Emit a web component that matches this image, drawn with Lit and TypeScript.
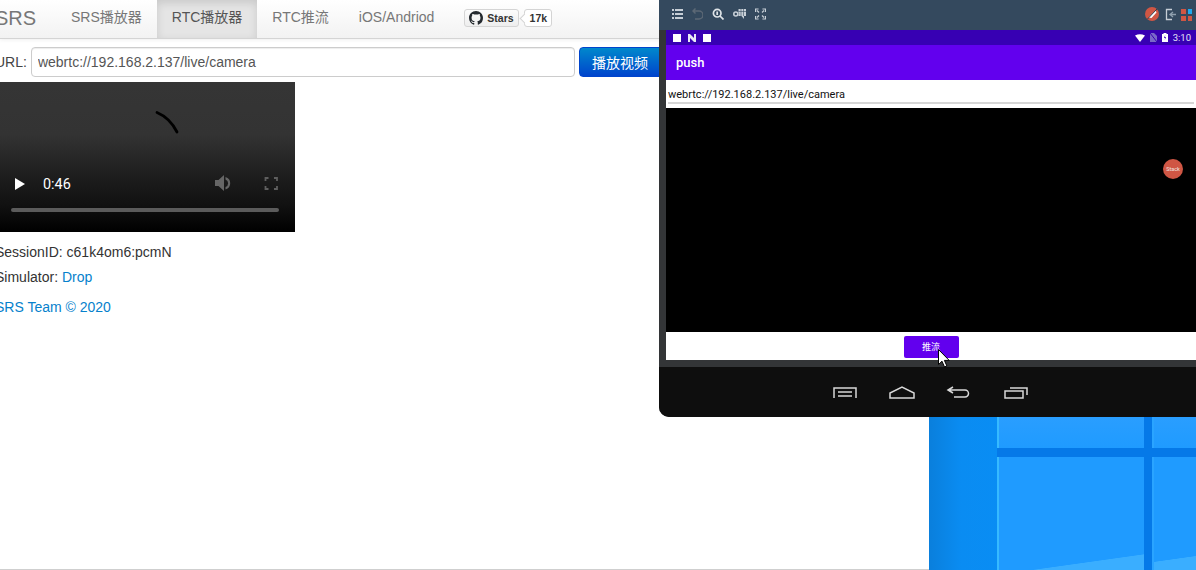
import { LitElement, html, css, svg } from 'lit'
import { customElement } from 'lit/decorators.js'

const GITHUB_MARK =
  'M8 0C3.58 0 0 3.58 0 8c0 3.54 2.29 6.53 5.47 7.59.4.07.55-.17.55-.38 0-.19-.01-.82-.01-1.49-2.01.37-2.53-.49-2.69-.94-.09-.23-.48-.94-.82-1.13-.28-.15-.68-.52-.01-.53.63-.01 1.08.58 1.23.82.72 1.21 1.87.87 2.33.66.07-.52.28-.87.51-1.07-1.78-.2-3.64-.89-3.64-3.95 0-.87.31-1.59.82-2.15-.08-.2-.36-1.02.08-2.12 0 0 .67-.21 2.2.82.64-.18 1.32-.27 2-.27s1.36.09 2 .27c1.53-1.04 2.2-.82 2.2-.82.44 1.1.16 1.92.08 2.12.51.56.82 1.27.82 2.15 0 3.07-1.87 3.75-3.65 3.95.29.25.54.73.54 1.48 0 1.07-.01 1.93-.01 2.2 0 .21.15.46.55.38A8.01 8.01 0 0 0 16 8c0-4.42-3.58-8-8-8z'

/** The browser page on the left: navbar, URL form, video and the notes below. */
@customElement('srs-page')
export class SrsPage extends LitElement {
  static styles = css`
    :host {
      display: block;
      font: 14px/20px 'Liberation Sans', 'Noto Sans CJK SC', sans-serif;
      color: #333;
    }
    a {
      color: #0681cc;
      text-decoration: none;
    }
    .navbar {
      display: flex;
      align-items: stretch;
      height: 38px;
      border-bottom: 1px solid #d4d4d4;
      background: linear-gradient(#ffffff, #f2f2f2);
      box-shadow: 0 1px 4px rgba(0, 0, 0, 0.065);
    }
    .brand {
      width: 61px;
      margin-left: -5px;
      font-size: 20px;
      line-height: 36px;
      color: #777;
    }
    .tab {
      padding: 0 15px;
      line-height: 35px;
      color: #777;
    }
    .tab.active {
      color: #555;
      background: #e5e5e5;
      box-shadow: inset 0 3px 8px rgba(0, 0, 0, 0.125);
    }
    .gh {
      display: flex;
      align-items: flex-start;
      gap: 5px;
      margin: 9px 0 0 15px;
      font: bold 10.5px/16px 'Liberation Sans', sans-serif;
      color: #333;
    }
    .gh-btn {
      display: flex;
      align-items: center;
      gap: 4px;
      height: 18px;
      width: 55px;
      box-sizing: border-box;
      padding-left: 4px;
      border: 1px solid #d5d5d5;
      border-radius: 3px;
      background: linear-gradient(#fcfcfc, #eeeeee);
    }
    .gh-btn svg {
      width: 14px;
      height: 14px;
      flex: none;
    }
    .gh-count {
      position: relative;
      height: 18px;
      width: 28px;
      box-sizing: border-box;
      text-align: center;
      border: 1px solid #d4d4d4;
      border-radius: 3px;
      background: #fff;
    }
    .gh-count::before {
      content: '';
      position: absolute;
      left: -4px;
      top: 5px;
      width: 6px;
      height: 6px;
      background: #fff;
      border-left: 1px solid #d4d4d4;
      border-bottom: 1px solid #d4d4d4;
      transform: rotate(45deg);
    }
    .form {
      display: flex;
      align-items: center;
      gap: 4px;
      height: 30px;
      margin: 8px 0 5px -5px;
    }
    .form label {
      color: #444;
    }
    .form input {
      width: 544px;
      height: 30px;
      box-sizing: border-box;
      padding: 0 6px;
      border: 1px solid #cccccc;
      border-radius: 4px;
      font: 14px 'Liberation Sans', sans-serif;
      color: #555;
      box-shadow: inset 0 1px 1px rgba(0, 0, 0, 0.075);
    }
    .play {
      width: 90px;
      height: 30px;
      border: 1px solid #0044cc;
      border-radius: 4px;
      padding: 0 0 0 3px;
      text-align: left;
      text-indent: 9px;
      font: 14px 'Liberation Sans', 'Noto Sans CJK SC', sans-serif;
      color: #fff;
      background: linear-gradient(#0088cc, #0044cc);
    }
    .video {
      position: relative;
      width: 295px;
      height: 150px;
      background: linear-gradient(#353535 0, #333 35%, #1c1c1c 65%, #111 82%, #000 100%);
    }
    .video svg {
      display: block;
      width: 295px;
      height: 150px;
    }
    .time {
      position: absolute;
      left: 43px;
      top: 92px;
      font: 14.400px/22px Roboto, sans-serif;
      color: #fff;
    }
    .notes {
      margin: 10px 0 0 -5px;
    }
    .notes p {
      margin: 0 0 5px;
    }
    .notes p.team {
      margin-top: 10px;
    }
  `

  render() {
    return html`
      <div class="navbar">
        <span class="brand">SRS</span>
        <span class="tab">SRS播放器</span>
        <span class="tab active">RTC播放器</span>
        <span class="tab">RTC推流</span>
        <span class="tab">iOS/Andriod</span>
        <div class="gh">
          <span class="gh-btn"
            ><svg viewBox="0 0 16 16"><path fill="#24292e" d=${GITHUB_MARK}></path></svg>Stars</span
          >
          <span class="gh-count">17k</span>
        </div>
      </div>
      <div class="form">
        <label>URL:</label>
        <input value="webrtc://192.168.2.137/live/camera" />
        <button class="play">播放视频</button>
      </div>
      <div class="video">
        <svg viewBox="0 0 295 150">
          <path d="M157 30.500Q170 36 177 50" fill="none" stroke="#000" stroke-width="2.800" stroke-linecap="round"></path>
          <path d="M15 96v12l10-6z" fill="#fff"></path>
          <path d="M215 98v6h3.500l5.500 5V93l-5.500 5z" fill="#666"></path>
          <path d="M225.500 95a6.500 6.500 0 0 1 0 12.500v-2.500a4 4 0 0 0 0-7.500z" fill="#666"></path>
          <path d="M265.500 99v-3h3M274 96h3v3M277 104v3h-3M268.500 107h-3v-3" fill="none" stroke="#5e5e5e" stroke-width="1.800"></path>
          <rect x="11" y="126" width="268" height="4" rx="2" fill="#5b5b5b"></rect>
        </svg>
        <span class="time">0:46</span>
      </div>
      <div class="notes">
        <p>SessionID: c61k4om6:pcmN</p>
        <p>Simulator: <a>Drop</a></p>
        <p class="team"><a>SRS Team © 2020</a></p>
      </div>
    `
  }
}

/** Android emulator window, with its toolbar and the "push" app. */
@customElement('emu-window')
export class EmuWindow extends LitElement {
  static styles = css`
    :host {
      display: flex;
      flex-direction: column;
      height: 417px;
      border-bottom-left-radius: 10px;
      overflow: hidden;
      background: #333537;
      font-family: Roboto, 'Liberation Sans', 'Noto Sans CJK SC', sans-serif;
    }
    .toolbar {
      display: flex;
      align-items: center;
      height: 30px;
      flex: none;
      box-sizing: border-box;
      padding: 0 4px 2px 13px;
      background: #34495e;
    }
    .toolbar svg {
      display: block;
    }
    .tools {
      display: flex;
      gap: 9px;
      align-items: center;
    }
    .spacer {
      flex: 1;
    }
    .screen {
      display: flex;
      flex-direction: column;
      height: 330px;
      margin-left: 7px;
      flex: none;
    }
    .status {
      display: flex;
      align-items: center;
      height: 15px;
      flex: none;
      padding: 0 5px 0 7px;
      background: #3700b3;
      color: #e8e4f8;
      font-size: 9.500px;
    }
    .status-left {
      display: flex;
      gap: 7px;
      align-items: center;
    }
    .sq {
      width: 8px;
      height: 8px;
      background: #fff;
    }
    .status-right {
      display: flex;
      gap: 5px;
      align-items: center;
    }
    .appbar {
      height: 35px;
      flex: none;
      padding-left: 10px;
      line-height: 35px;
      font-size: 13px;
      font-weight: 500;
      color: #fff;
      background: #6200ee;
    }
    .url {
      height: 28px;
      flex: none;
      box-sizing: border-box;
      padding: 7px 2px 0;
      background: #fff;
      font-size: 11px;
      line-height: 16px;
      color: #111;
    }
    .url div {
      height: 15px;
      border-bottom: 2px solid #d6d6d6;
    }
    .preview {
      position: relative;
      flex: 1;
      background: #000;
    }
    .stack {
      position: absolute;
      left: 497px;
      top: 51px;
      width: 20px;
      height: 20px;
      border-radius: 50%;
      background: #cf5644;
      color: #f2e6e0;
      font-size: 5.500px;
      line-height: 20px;
      text-align: center;
    }
    .actions {
      display: flex;
      justify-content: center;
      align-items: center;
      height: 28px;
      flex: none;
      background: #fff;
    }
    .push {
      width: 55px;
      height: 22px;
      margin-top: 2px;
      border-radius: 2px;
      font-size: 9px;
      line-height: 22px;
      text-align: center;
      color: #fff;
      background: #6200ee;
    }
    .navkeys {
      display: flex;
      justify-content: center;
      align-items: center;
      gap: 31px;
      flex: 1;
      margin-top: 7px;
      padding-left: 6px;
      background: #0e0e0e;
    }
    .navkeys svg {
      display: block;
      width: 26px;
      height: 14px;
      fill: none;
      stroke: #d8d8d8;
      stroke-width: 1.500;
    }
  `

  render() {
    const tool = '#c6ced6'
    return html`
      <div class="toolbar">
        <div class="tools">
          <svg width="11" height="12" viewBox="0 0 11 12" fill=${tool}>
            <path d="M0 1h2v2H0zM0 5h2v2H0zM0 9h2v2H0zM3 1h8v2H3zM3 5h8v2H3zM3 9h8v2H3z"></path>
          </svg>
          <svg width="11" height="12" viewBox="0 0 11 12" fill="none" stroke="#5c6875" stroke-width="1.500">
            <path d="M2 3h5a3.500 3.500 0 0 1 0 8H3M3.500 0.500L1 3l2.500 2.500"></path>
          </svg>
          <svg width="12" height="12" viewBox="0 0 12 12" fill="none" stroke="#dfe4e8" stroke-width="1.700">
            <circle cx="5.200" cy="5.200" r="3.800"></circle>
            <path d="M8 8l3.500 3.500M5.200 3.500v3.400"></path>
          </svg>
          <svg width="13" height="12" viewBox="0 0 13 12">
            <circle cx="2.800" cy="6" r="2" fill="none" stroke=${tool} stroke-width="1.600"></circle>
            <path d="M5.500 1h7.500v7h-2v3l-2.500-3H5.500V6.500l1-.5-1-1z" fill=${tool}></path>
            <path d="M8 1v7M10.500 1v7M5.500 3.500H13" stroke="#34495e" stroke-width="0.600"></path>
          </svg>
          <svg width="11" height="12" viewBox="0 0 11 12" fill="none" stroke=${tool} stroke-width="1.200">
            <path d="M0.600 4V1h3M7.400 1h3v3M10.400 8v3h-3M3.600 11h-3V8M2 2.500l2 2M9 2.500l-2 2M9 9.500l-2-2M2 9.500l2-2"></path>
          </svg>
        </div>
        <span class="spacer"></span>
        <svg width="48" height="16" viewBox="0 0 48 16">
          <circle cx="8" cy="8" r="7" fill="#cf5644"></circle>
          <path d="M4.500 11.500l7-7 1 2-5 5.500z" fill="#fff"></path>
          <path d="M3.500 13L13 3" stroke="#2c3e50" stroke-width="1"></path>
          <path d="M28 3.500h-5.500v10H28" fill="none" stroke="#c6ced6" stroke-width="1.300"></path>
          <path d="M26 8.500h6M29 6l-3 2.500 3 2.500" fill="none" stroke="#8fa0ae" stroke-width="1.300"></path>
          <rect x="37" y="3" width="5" height="5" fill="#cf5644"></rect>
          <rect x="44" y="3" width="4" height="5" fill="#1fa8ee"></rect>
          <rect x="37" y="10" width="5" height="5" fill="#cf5644"></rect>
          <rect x="44" y="10" width="4" height="5" fill="#cf5644"></rect>
        </svg>
      </div>
      <div class="screen">
        <div class="status">
          <div class="status-left">
            <span class="sq"></span>
            <svg width="8" height="8" viewBox="0 0 8 8"><path d="M0 0h2l4 4V0h2v8H6L2 4v4H0z" fill="#e8e8f4"></path></svg>
            <span class="sq"></span>
          </div>
          <span class="spacer"></span>
          <div class="status-right">
            <svg width="10" height="8" viewBox="0 0 10 8"><path d="M0 1.500Q5-1 10 1.500L5 8z" fill="#fff"></path></svg>
            <svg width="7" height="9" viewBox="0 0 7 9"><path d="M0 0h4l3 3v6H0z" fill="#7a68c8"></path><path d="M0 0l7 9" stroke="#3700b3"></path></svg>
            <svg width="6" height="9" viewBox="0 0 6 9"><path d="M1.500 0h3v1H6v8H0V1h1.500z" fill="#fff"></path><path d="M3.200 2L2 5h1l-.2 2L4 4H3z" fill="#3700b3"></path></svg>
            <span>3:10</span>
          </div>
        </div>
        <div class="appbar">push</div>
        <div class="url"><div>webrtc://192.168.2.137/live/camera</div></div>
        <div class="preview"><span class="stack">Stack</span></div>
        <div class="actions"><span class="push">推流</span></div>
      </div>
      <div class="navkeys">
        <svg viewBox="0 0 26 14"><path d="M2 13V3h22v10M6 7h14M6 11h14"></path></svg>
        <svg viewBox="0 0 26 14"><path d="M1 13V8l12-6 12 6v5z"></path></svg>
        <svg viewBox="0 0 26 14"><path d="M7 2L2 5l5 3M2 5h17a3.500 3.500 0 0 1 0 7H8"></path></svg>
        <svg viewBox="0 0 26 14"><path d="M2 6h18v7H2zM7 3h17v7"></path></svg>
      </div>
    `
  }
}

@customElement('app-root')
export class AppRoot extends LitElement {
  static styles = css`
    :host {
      display: block;
      position: relative;
      width: 1196px;
      height: 570px;
      overflow: hidden;
      background: #fff;
    }
    .floor {
      position: absolute;
      left: 0;
      right: 0;
      bottom: 0;
      height: 1px;
      background: #cfcfcf;
    }
    .wallpaper {
      position: absolute;
      left: 929px;
      top: 416px;
      width: 267px;
      height: 154px;
      display: grid;
      grid-template-columns: 68px 147px 8px 44px;
      grid-template-rows: 32px 9px 113px;
      background-image: linear-gradient(90deg, #0a7fdc 0, #0a8cf2 12%, #0690f8 70%, #0a86ea 100%);
    }
    .pane {
      background: linear-gradient(#2a9eff, #1f9bff);
      border-left: 2px solid #36baff;
    }
    .strip {
      grid-row: 1 / 4;
    }
    .pane.a {
      grid-column: 2;
      grid-row: 1;
    }
    .pane.b {
      grid-column: 4;
      grid-row: 1;
      border-left-color: #2aa4ff;
    }
    .pane.c {
      grid-column: 2;
      grid-row: 3;
      background: linear-gradient(172deg, #1f9bff 88%, #3aaeff 88.500%);
    }
    .pane.d {
      grid-column: 4;
      grid-row: 3;
      border-left-color: #2aa4ff;
      background: linear-gradient(172deg, #1f9bff 88%, #3aaeff 88.500%);
    }
    .bar-h {
      grid-column: 2 / 5;
      grid-row: 2;
      background: #0579e8;
    }
    .bar-v {
      grid-column: 3;
      grid-row: 1 / 4;
      background: #0579e8;
    }
    .emu {
      position: absolute;
      left: 659px;
      top: 0;
      width: 537px;
    }
    .cursor {
      position: absolute;
      left: 938px;
      top: 349px;
    }
  `

  render() {
    return html`
      <srs-page></srs-page>
      <div class="floor"></div>
      <div class="wallpaper">
        <span class="strip"></span>
        <span class="pane a"></span>
        <span class="pane b"></span>
        <span class="pane c"></span>
        <span class="pane d"></span>
        <span class="bar-h"></span>
        <span class="bar-v"></span>
      </div>
      <emu-window class="emu"></emu-window>
      <svg class="cursor" width="12" height="19" viewBox="0 0 12 19">
        ${svg`<path d="M0.500 0.500v15l3.500-3.300 2.500 5.800 2.400-1-2.500-5.600h4.800z" fill="#fff" stroke="#000" stroke-width="1"></path>`}
      </svg>
    `
  }
}
